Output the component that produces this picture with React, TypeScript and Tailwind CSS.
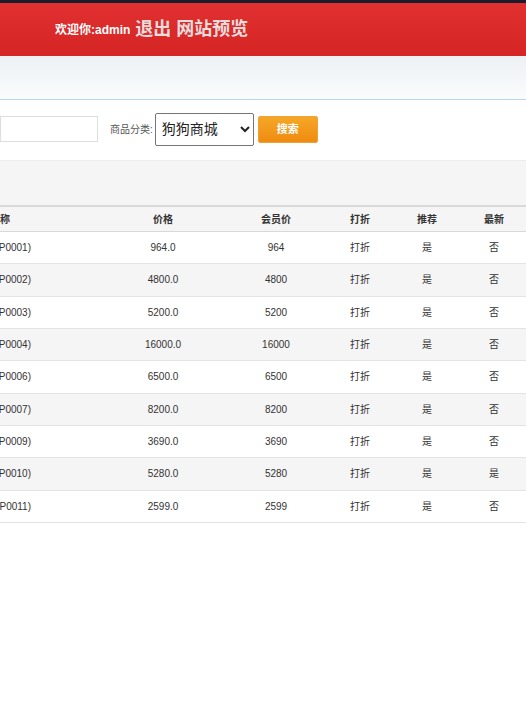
import React from 'react'

const font = { fontFamily: '"Liberation Sans", "Noto Sans CJK SC", Arial, sans-serif' }

const rows = [
  { code: 'P0001', price: '964.0', member: '964', hot: '是', isNew: '否' },
  { code: 'P0002', price: '4800.0', member: '4800', hot: '是', isNew: '否' },
  { code: 'P0003', price: '5200.0', member: '5200', hot: '是', isNew: '否' },
  { code: 'P0004', price: '16000.0', member: '16000', hot: '是', isNew: '否' },
  { code: 'P0006', price: '6500.0', member: '6500', hot: '是', isNew: '否' },
  { code: 'P0007', price: '8200.0', member: '8200', hot: '是', isNew: '否' },
  { code: 'P0009', price: '3690.0', member: '3690', hot: '是', isNew: '否' },
  { code: 'P0010', price: '5280.0', member: '5280', hot: '是', isNew: '是' },
  { code: 'P0011', price: '2599.0', member: '2599', hot: '是', isNew: '否' },
]

function NameCell({ text, bold }: { text: string; bold?: boolean }) {
  return (
    <div className="flex w-[106px] shrink-0">
      <div className={'flex justify-end overflow-hidden whitespace-nowrap ' + (bold ? 'w-[10px] font-bold' : 'w-[31px]')}>
        {text}
      </div>
    </div>
  )
}

export default function App() {
  return (
    <div className="h-[702px] w-[526px] overflow-hidden bg-white text-[#333]" style={font}>
      <div className="h-[3px] bg-[#1c1c2c]" />
      <div className="flex h-[53px] items-center bg-gradient-to-b from-[#e13030] to-[#d52424] pl-[55px]">
        <span className="text-[12px] font-bold text-white">欢迎你:admin</span>
        <span className="ml-[5px] text-[18px] font-bold text-[#e9dcdc]">退出</span>
        <span className="ml-[5px] text-[18px] font-bold text-[#e9dcdc]">网站预览</span>
      </div>
      <div className="h-[44px] border-b border-[#bcd4ec] bg-gradient-to-b from-[#edf1f4] to-[#fafcfd]" />

      <div className="flex h-[60px] items-center pb-[2px]">
        <input className="h-[26px] w-[98px] shrink-0 border border-[#dedede] bg-white outline-none" />
        <span className="ml-[12px] text-[10px] text-[#555]">商品分类:</span>
        <select
          defaultValue="dog"
          className="ml-[2px] h-[33px] w-[99px] rounded-[2px] border border-[#767676] bg-white pl-[2px] text-[14px] text-[#222]"
          style={font}
        >
          <option value="dog">狗狗商城</option>
        </select>
        <button className="ml-[4px] h-[27px] w-[60px] rounded-[2px] border border-[#eea23a] bg-gradient-to-b from-[#f6a726] to-[#ee8b10] text-[11px] font-bold text-white">
          搜索
        </button>
      </div>

      <div className="h-[45px] border-t border-[#ececec] bg-[#f5f5f5]" />

      <div className="text-[10px]">
        <div className="flex h-[27px] items-center border-y-2 border-[#d9d9d9] border-b-[1px] bg-[#f5f5f5] font-bold">
          <NameCell text="商品名称" bold />
          <div className="w-[114px] shrink-0 text-center">价格</div>
          <div className="w-[112px] shrink-0 text-center">会员价</div>
          <div className="w-[56px] shrink-0 text-center">打折</div>
          <div className="w-[78px] shrink-0 text-center">推荐</div>
          <div className="w-[56px] shrink-0 text-center">最新</div>
        </div>
        {rows.map((r, i) => (
          <div
            key={r.code}
            className={'flex h-[32.33px] items-center border-b border-[#e3e3e3] ' + (i % 2 ? 'bg-[#f5f5f5]' : 'bg-white')}
          >
            <NameCell text={'商品(' + r.code + ')'} />
            <div className="w-[114px] shrink-0 text-center">{r.price}</div>
            <div className="w-[112px] shrink-0 text-center">{r.member}</div>
            <div className="w-[56px] shrink-0 text-center">打折</div>
            <div className="w-[78px] shrink-0 text-center">{r.hot}</div>
            <div className="w-[56px] shrink-0 text-center">{r.isNew}</div>
          </div>
        ))}
      </div>
    </div>
  )
}
